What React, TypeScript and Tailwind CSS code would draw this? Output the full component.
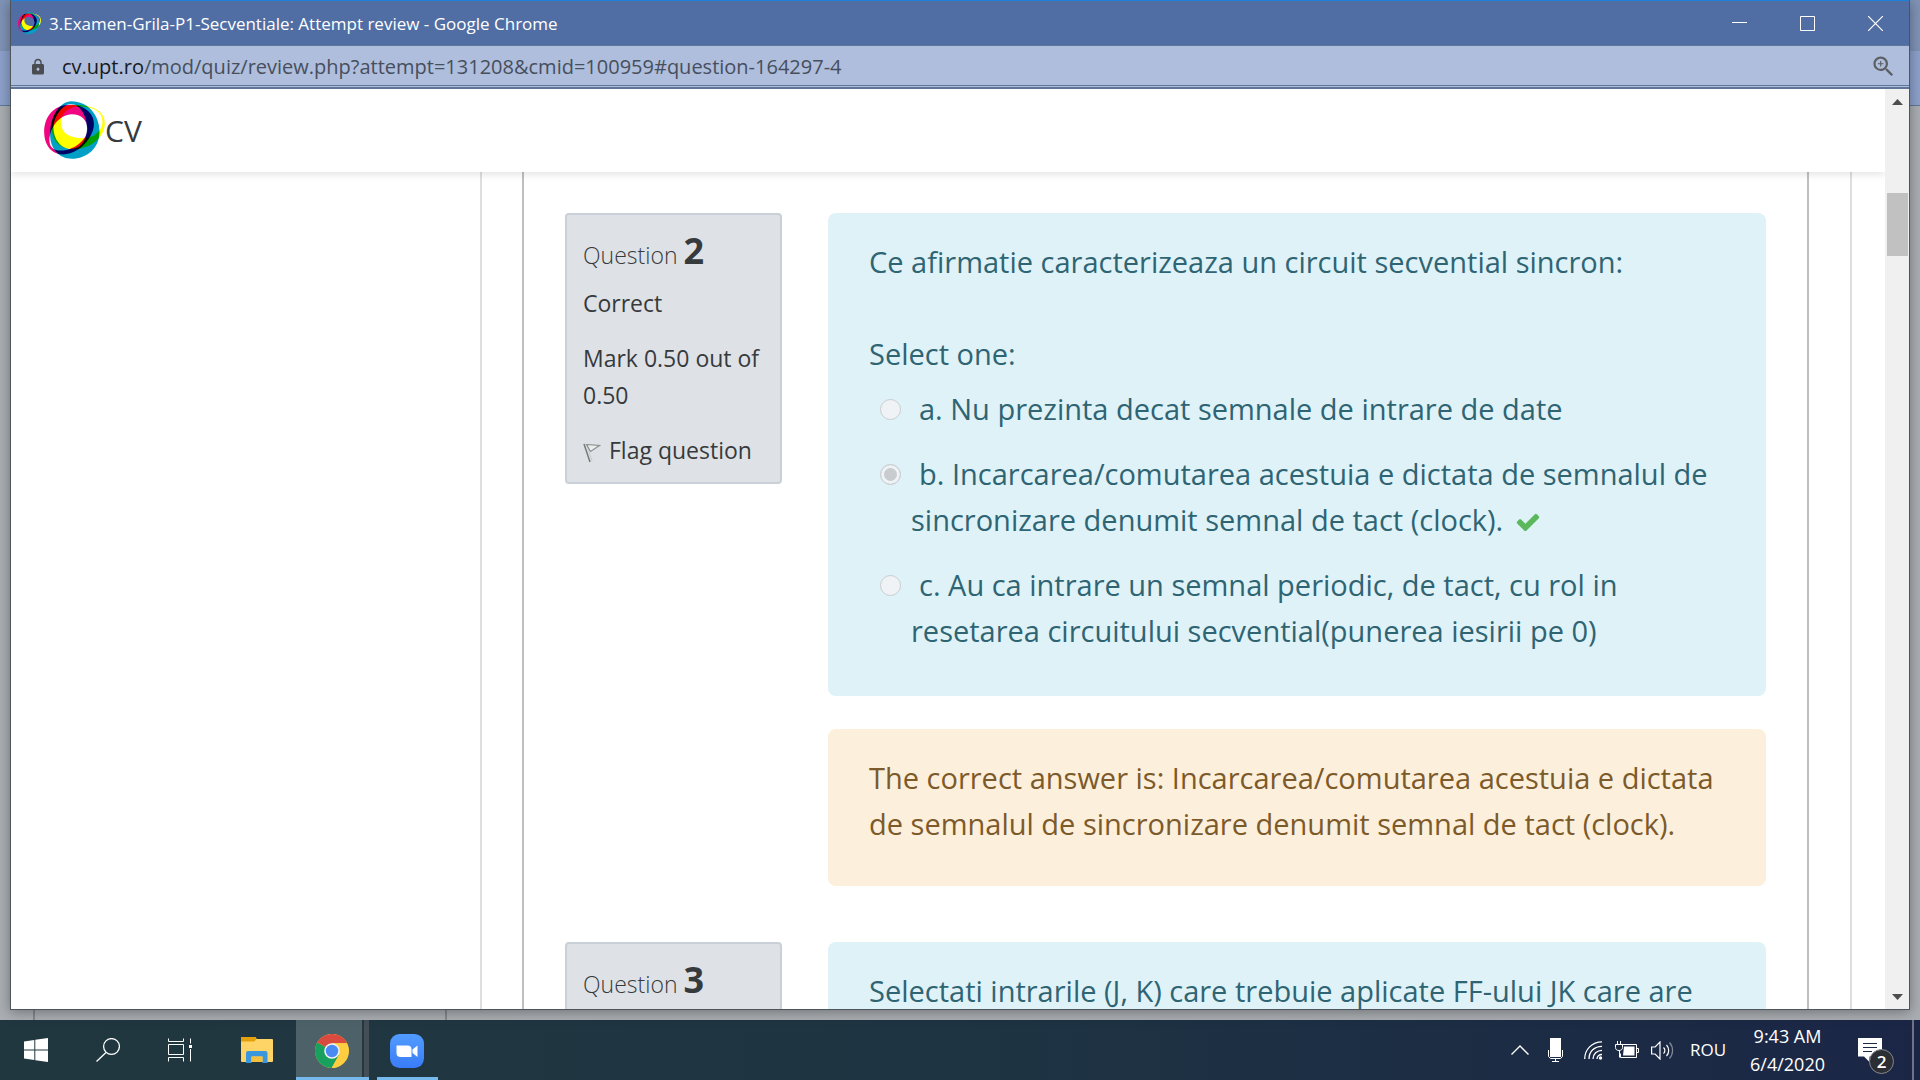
import React from 'react';
import { MdLock, MdZoomIn } from 'react-icons/md';

type Option = { id: string; text: string; checked?: boolean; correct?: boolean };

const options: Option[] = [
  { id: 'a', text: 'a. Nu prezinta decat semnale de intrare de date' },
  {
    id: 'b',
    text: 'b. Incarcarea/comutarea acestuia e dictata de semnalul de sincronizare denumit semnal de tact (clock).',
    checked: true,
    correct: true,
  },
  {
    id: 'c',
    text: 'c. Au ca intrare un semnal periodic, de tact, cu rol in resetarea circuitului secvential(punerea iesirii pe 0)',
  },
];

/* ---------- logo ---------- */

function RingLogo({ className }: { className: string }) {
  return (
    <svg viewBox="132 92 184 176" className={`isolate shrink-0 ${className}`} fillRule="evenodd" aria-hidden="true">
      <path
        fill="#00a0c6"
        className="mix-blend-multiply"
        d="M215 93C265 93 300 135 300 185C300 235 262 267 216 267C176 267 150 235 150 195C150 140 178 93 215 93zM212 101C190 101 160 140 160 172C160 210 185 238 213 238C242 238 262 212 262 175C262 135 240 101 212 101z"
      />
      <path
        fill="#f0047f"
        className="mix-blend-multiply"
        d="M210 103C250 103 283 125 283 162C283 200 240 254 190 254C150 254 132 220 132 186C132 140 160 103 210 103zM216 132C177 132 148 175 148 212C148 235 165 245 190 242C225 238 263 210 263 176C263 150 245 132 216 132z"
      />
      <path
        fill="#ffff00"
        className="mix-blend-multiply"
        d="M225 104C285 104 316 125 316 160C316 205 265 240 218 238C180 237 155 215 155 170C155 130 175 104 225 104zM240 109C205 109 183 130 183 158C183 190 210 205 250 205C285 205 309 180 309 155C309 125 280 109 240 109z"
      />
    </svg>
  );
}

/* ---------- browser window ---------- */

function TitleBar() {
  return (
    <div className="flex h-[46px] shrink-0 items-center border-t border-b border-t-[#1a82da] border-b-[#5f7699] bg-[#506ea4] pl-[7px] text-white">
      <RingLogo className="h-[22px] w-[23px]" />
      <h1 className="ml-2 flex-1 truncate pt-px text-[17px] leading-6">3.Examen-Grila-P1-Secventiale: Attempt review - Google Chrome</h1>
      <button aria-label="Minimize" className="flex h-full w-[68px] items-center justify-center">
        <svg viewBox="0 0 15 15" className="size-[15px]" stroke="currentColor"><path d="M0 6.500h15" /></svg>
      </button>
      <button aria-label="Maximize" className="flex h-full w-[68px] items-center justify-center">
        <svg viewBox="0 0 15 15" className="size-[15px]" stroke="currentColor" fill="none"><path d="M.5.5h14v14H.5z" /></svg>
      </button>
      <button aria-label="Close" className="flex h-full w-[68px] items-center justify-center">
        <svg viewBox="0 0 15 15" className="size-[15px]" stroke="currentColor" strokeWidth="1.200"><path d="M0 0l15 15M15 0L0 15" /></svg>
      </button>
    </div>
  );
}

function AddressBar() {
  return (
    <div className="shrink-0 border-b-2 border-[#5f7699] bg-[#aebedc] pb-px">
      <div className="flex h-10 items-center border-b border-[#5f7699] pt-0.5 pr-3 pl-[18px]">
        <MdLock className="size-[18px] text-[#494c50]" />
        <p className="ml-[15px] flex-1 truncate text-[20px] leading-7 text-[#474e5c]">
          <span className="text-[#17191d]">cv.upt.ro</span>/mod/quiz/review.php?attempt=131208&amp;cmid=100959#question-164297-4
        </p>
        <button aria-label="Zoom">
          <MdZoomIn className="size-[27px] text-[#5c5f63]" />
        </button>
      </div>
    </div>
  );
}

function ScrollBar() {
  return (
    <div className="flex w-6 shrink-0 flex-col items-center bg-[#f0f0f0] pt-2.5 pb-[9px]">
      <svg viewBox="0 0 11 6" className="h-1.5 w-[11px]" fill="#4d4d4d"><path d="M0 6L5.500 0L11 6z" /></svg>
      <div className="mt-[88px] h-[63px] w-[21px] bg-[#c1c1c1]" />
      <svg viewBox="0 0 11 6" className="mt-auto h-1.5 w-[11px]" fill="#4d4d4d"><path d="M0 0L5.500 6L11 0z" /></svg>
    </div>
  );
}

function FlagIcon() {
  return (
    <svg viewBox="0 0 18 20" className="mt-1 h-5 w-[18px] shrink-0" fill="none">
      <path d="M1 1l6 18" stroke="#77787a" strokeWidth="1.500" />
      <path d="M3.500 1l5.500 17" stroke="#c9c9c9" strokeWidth="1" />
      <path d="M3.500 1.500L16.500 2.500L7.500 8.500z" stroke="#8b8c8e" strokeWidth="1.200" fill="#eceded" />
    </svg>
  );
}

function InfoBox({ number, children }: { number: number; children?: React.ReactNode }) {
  return (
    <aside className="min-h-[200px] w-[217px] shrink-0 rounded-[4px] border-2 border-[#cad0d7] bg-[#dee2e6] px-4 pt-3.5 pb-[13px] text-[23px] leading-[37px] text-[#373a3c]">
      <h3 className="font-light leading-[44px]">
        Question <span className="text-[36px] font-bold">{number}</span>
      </h3>
      {children}
    </aside>
  );
}

function CheckMark() {
  return (
    <svg viewBox="0 0 1792 1792" className="ml-1 inline-block size-[26px] align-[-4px]" fill="#5cb85c" role="img" aria-label="Correct">
      <path d="M1671 566q0 40-28 68l-724 724-136 136q-28 28-68 28t-68-28l-136-136-362-362q-28-28-28-68t28-68l136-136q28-28 68-28t68 28l294 295 656-657q28-28 68-28t68 28l136 136q28 28 28 68z" />
    </svg>
  );
}

function OptionRow({ option }: { option: Option }) {
  return (
    <div className="pl-[42px] -indent-[31px]">
      <input
        type="radio"
        name="q2"
        id={`q2-${option.id}`}
        defaultChecked={option.checked}
        disabled
        className="mr-[18px] inline-block size-[21px] appearance-none rounded-full border border-[#c9cdd0] bg-[#eff3f5] align-[0px] checked:bg-[#c8cccf] checked:shadow-[inset_0_0_0_3px_#eff3f5]"
      />
      <label htmlFor={`q2-${option.id}`}>{option.text}</label>
      {option.correct && <> <CheckMark /></>}
    </div>
  );
}

function Page() {
  return (
    <div className="flex min-h-0 flex-1 bg-white">
      <div className="flex min-w-0 flex-1 flex-col overflow-hidden">
        <header className="z-10 flex h-[83px] shrink-0 items-center bg-white pl-[33px] shadow-[0_2px_8px_rgba(0,0,0,0.12)]">
          <a href="#home" className="flex items-center text-[30px] text-[#373a3c]">
            <RingLogo className="mb-0.5 h-[58px] w-[61px]" />
            CV
          </a>
        </header>
        <main className="min-h-0 flex-1 overflow-hidden pr-[33px] pl-[469px]">
          <div className="border-x-2 border-[#dedede] pr-[41px] pl-10">
            <div className="border-x-2 border-[#bfbfbf] pt-[41px] pr-[41px] pl-[41px]">
              <section className="flex items-start gap-[46px]">
                <InfoBox number={2}>
                  <p className="mt-2">Correct</p>
                  <p className="mt-[18px]">Mark 0.50 out of 0.50</p>
                  <button className="mt-[18px] flex items-center whitespace-nowrap">
                    <FlagIcon />
                    <span className="ml-2">Flag question</span>
                  </button>
                </InfoBox>
                <div className="min-w-0 flex-1 text-[29px] leading-[46px]">
                  <div className="rounded-lg bg-[#def2f8] px-[41px] pt-[26px] pb-[42px] text-[#2f6473]">
                    <p>Ce afirmatie caracterizeaza un circuit secvential sincron:</p>
                    <p className="mt-[46px]">Select one:</p>
                    <div className="mt-[9px] flex flex-col gap-[19px]">
                      {options.map((o) => <OptionRow key={o.id} option={o} />)}
                    </div>
                  </div>
                  <div className="mt-[33px] rounded-lg bg-[#fcefdc] px-[41px] pt-[26px] pb-[39px] text-[#7d5a29]">
                    The correct answer is: Incarcarea/comutarea acestuia e dictata de semnalul de sincronizare denumit semnal de tact (clock).
                  </div>
                </div>
              </section>
              <section className="mt-14 flex items-start gap-[46px]">
                <InfoBox number={3} />
                <div className="min-w-0 flex-1 rounded-lg bg-[#def2f8] px-[41px] pt-[26px] pb-[42px] text-[29px] leading-[46px] text-[#2f6473]">
                  <p className="mb-[92px]">Selectati intrarile (J, K) care trebuie aplicate FF-ului JK care are</p>
                </div>
              </section>
            </div>
          </div>
        </main>
      </div>
      <ScrollBar />
    </div>
  );
}

function BackWindow() {
  return (
    <div className="absolute inset-0 flex flex-col">
      <div className="h-[51px] bg-[#7f93b6]" />
      <div className="h-[55px] border-b border-[#5f7699] bg-[#8ca1cb]" />
      <div className="flex-1 bg-[#aaaeb2] pl-[33px]">
        <div className="h-full w-[414px] border-x-2 border-[#84888c]" />
      </div>
    </div>
  );
}

/* ---------- taskbar ---------- */

function Taskbar() {
  return (
    <footer className="flex h-[60px] shrink-0 items-stretch bg-linear-to-r from-[#21373f] via-[#1e3442] to-[#1b2646] text-white">
      <button aria-label="Start" className="flex w-[72px] items-center justify-center">
        <svg viewBox="0 0 24 24" className="size-6" fill="currentColor">
          <path d="M0 3.400L10.300 2v9.500H0zM11.300 1.800L24 0v11.500H11.300zM0 12.500h10.300V22L0 20.600zM11.300 12.500H24V24L11.300 22.200z" />
        </svg>
      </button>
      <button aria-label="Search" className="flex w-[72px] items-center justify-center">
        <svg viewBox="0 0 24 24" className="size-6" fill="none" stroke="currentColor" strokeWidth="1.300">
          <circle cx="15.500" cy="8.500" r="7.900" />
          <path d="M10 14.500L.5 23.500" />
        </svg>
      </button>
      <button aria-label="Task View" className="flex w-[72px] items-center justify-center">
        <svg viewBox="0 0 24 24" className="size-6" fill="none" stroke="currentColor">
          <path d="M.5.500v3h15v-3M.5 6.500h15v10h-15zM.5 23.500v-4h15v4M22.500.500v5M22.500 11v12.500" />
          <path d="M21 7h3v3h-3z" fill="currentColor" stroke="none" />
        </svg>
      </button>
      <button aria-label="File Explorer" className="ml-1 flex w-[74px] items-center justify-center">
        <svg viewBox="0 0 32 27" className="h-[27px] w-8">
          <path d="M0 1a1 1 0 0 1 1-1h13l1.500 2H31a1 1 0 0 1 1 1v21a1 1 0 0 1-1 1H1a1 1 0 0 1-1-1z" fill="#ffd467" />
          <path d="M0 1a1 1 0 0 1 1-1h12.500a1.500 1.500 0 0 1 1.500 2.500c-1 1.800-2 2-3.500 2H0z" fill="#e5a00d" />
          <path d="M5 16a2 2 0 0 1 2-2h17.500a2 2 0 0 1 2 2v10h-5v-6.500H10.500V26H5z" fill="#3a97dd" />
          <path d="M10.500 19.500h11V25h-11z" fill="#f5bf3f" />
        </svg>
      </button>
      <button aria-label="Google Chrome" className="ml-0.5 flex w-[73px] border-b-[3px] border-[#76b9ed]">
        <span className="flex h-full flex-1 items-center justify-center bg-[#4d6169] pt-1 pl-1.5">
          <svg viewBox="0 0 48 48" className="size-[34px]">
            <circle cx="24" cy="24" r="24" fill="#ffcd40" />
            <path d="M24 24L3.200 12A24 24 0 0 1 44.800 12L44.800 13H24z" fill="#db4a3e" />
            <path d="M24 24L3.200 12A24 24 0 0 0 23.500 48L34 30z" fill="#17a05e" />
            <path d="M24 13h20.800A24 24 0 0 1 23.500 48L34 29z" fill="#ffcd40" />
            <circle cx="24" cy="24" r="11" fill="#f1f1f1" />
            <circle cx="24" cy="24" r="8.800" fill="#4a8af4" />
          </svg>
        </span>
        <span className="h-full w-[7px] border-l-2 border-[#26373f] bg-[#434e56]" />
      </button>
      <button aria-label="Zoom" className="ml-2 flex w-[61px] items-center justify-center border-b-[3px] border-[#76b9ed] pt-1 pr-px">
        <svg viewBox="0 0 34 34" className="size-[34px]">
          <defs>
            <linearGradient id="zoomBlue" x1="0" y1="0" x2="0" y2="1">
              <stop offset="0" stopColor="#519cff" />
              <stop offset="1" stopColor="#3a7cf8" />
            </linearGradient>
          </defs>
          <rect width="34" height="34" rx="9.500" fill="url(#zoomBlue)" />
          <path d="M6.500 11.500h11a4 4 0 0 1 4 4v7.500H10.500a4 4 0 0 1-4-4zM22.500 15.500l5-4v11.500l-5-4z" fill="#fff" />
        </svg>
      </button>

      <div className="ml-auto flex items-center">
        <button aria-label="Show hidden icons">
          <svg viewBox="0 0 18 10" className="h-2.5 w-[18px]" fill="none" stroke="currentColor" strokeWidth="1.400"><path d="M.5 9.500L9 1l8.500 8.500" /></svg>
        </button>
        <svg viewBox="0 0 15 24" className="ml-[19px] h-6 w-[15px]" fill="none" stroke="currentColor">
          <path d="M2 0h11v19H2z" fill="currentColor" stroke="none" />
          <path d="M.5 12v6.500l2 2h10l2-2V12M7.500 20.500v3M4 23.500h7" />
        </svg>
        <svg viewBox="0 0 19 19" className="ml-[21px] size-[19px]" fill="none" stroke="currentColor" strokeWidth="1.300">
          <path d="M.7 18C.7 8.500 8 .9 18 .9" />
          <path d="M5 18C5 10.500 10.500 5.300 18 5.300M9 18c0-5 4-8.700 9-8.700M13 18c0-2.500 2-4.500 5-4.500" />
          <circle cx="16.500" cy="17" r="1.700" fill="currentColor" stroke="none" />
        </svg>
        <svg viewBox="0 0 24 17" className="mb-0.5 ml-3 h-[17px] w-6" fill="none" stroke="currentColor">
          <path d="M7 3.500h14.500v13H5.500v-4M22 7.500h1.500v4H22" />
          <path d="M9 5.500h10.500v9H8z" fill="currentColor" stroke="none" />
          <path d="M2.500 0v3.500M5.500 0v3.500M.5 3.500h7v3c0 2-1.500 3-3.500 3s-3.500-1-3.500-3zM4.500 9.500v7" fill="#1c2b42" />
        </svg>
        <svg viewBox="0 0 23 19" className="ml-3 h-[19px] w-[23px]" fill="none" stroke="currentColor" strokeWidth="1.200">
          <path d="M.6 6h3.500L9 1v17l-4.900-5H.6z" />
          <path d="M12.500 6.500a4 4 0 0 1 0 6M15.500 4a8 8 0 0 1 0 11" />
          <path d="M18.500 1.500a12 12 0 0 1 0 16" opacity="0.450" />
        </svg>
        <span className="ml-4 text-[17px] leading-7">ROU</span>
        <div className="ml-6 flex flex-col items-center text-[18px] leading-7">
          <span>9:43 AM</span>
          <span>6/4/2020</span>
        </div>
        <button aria-label="2 new notifications" className="relative ml-[33px] mr-[18px] h-9 w-9">
          <svg viewBox="0 0 24 24" className="size-6" fill="none">
            <path d="M0 0h24v18.500H11.500V24L6 18.500H0z" fill="#fff" />
            <path d="M5 5.500h14M5 9.500h14M5 13.500h9" stroke="#1b2846" strokeWidth="1.200" />
          </svg>
          <span className="absolute top-[17px] left-[11px] flex size-[25px] items-center justify-center rounded-full border border-[#85888d] bg-[#2b2e33] text-[17px] leading-none font-semibold">2</span>
        </button>
        <div className="mr-1.5 h-[60px] w-0.5 bg-[#6d7488]" />
      </div>
    </footer>
  );
}

export default function App() {
  return (
    <div className="flex h-screen flex-col overflow-hidden font-['Open_Sans','Noto_Sans',sans-serif]">
      <div className="relative flex min-h-0 flex-1">
        <BackWindow />
        <div className="relative mx-2.5 mb-2.5 flex min-w-0 flex-1 flex-col border-x border-b border-[#4f555c] shadow-[0_2px_12px_rgba(0,0,0,0.35)]">
          <TitleBar />
          <AddressBar />
          <Page />
        </div>
      </div>
      <Taskbar />
    </div>
  );
}
